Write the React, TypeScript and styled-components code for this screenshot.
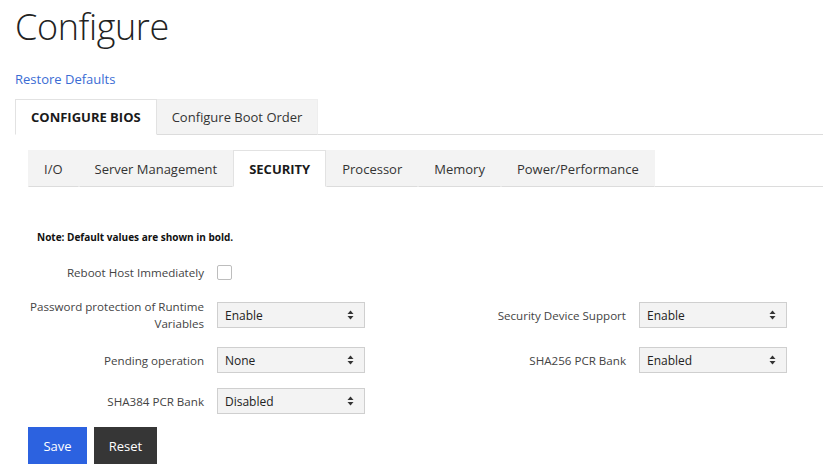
import React from 'react'
import styled, { createGlobalStyle } from 'styled-components'

const GlobalStyle = createGlobalStyle`
	html, body {
		margin: 0;
		padding: 0;
		background: #ffffff;
	}
	body {
		font-family: 'Open Sans', 'Noto Sans', Arial, sans-serif;
		color: #222;
	}
	* {
		box-sizing: border-box;
	}
`

interface ITab {
	label: string
	active?: boolean
}

interface IField {
	label: string
	value?: string
	options?: string[]
	checkbox?: boolean
}

const biosTabs: ITab[] = [
	{ label: 'Configure BIOS', active: true },
	{ label: 'Configure Boot Order' }
]

const sectionTabs: ITab[] = [
	{ label: 'I/O' },
	{ label: 'Server Management' },
	{ label: 'Security', active: true },
	{ label: 'Processor' },
	{ label: 'Memory' },
	{ label: 'Power/Performance' }
]

// grid order: left, right per row (null = empty cell)
const rows: Array<[IField, IField | null]> = [
	[{ label: 'Reboot Host Immediately', checkbox: true }, null],
	[
		{ label: 'Password protection of Runtime Variables', value: 'Enable', options: ['Enable', 'Disable'] },
		{ label: 'Security Device Support', value: 'Enable', options: ['Enable', 'Disable'] }
	],
	[
		{ label: 'Pending operation', value: 'None', options: ['None', 'TPM Clear'] },
		{ label: 'SHA256 PCR Bank', value: 'Enabled', options: ['Enabled', 'Disabled'] }
	],
	[{ label: 'SHA384 PCR Bank', value: 'Disabled', options: ['Enabled', 'Disabled'] }, null]
]

function SortIcon () {
	return (
		<svg width='7' height='10' viewBox='0 0 7 10'>
			<path d='M3.5 0.5 L6.5 4 L0.5 4 Z' fill='#333' />
			<path d='M3.5 9.5 L6.5 6 L0.5 6 Z' fill='#333' />
		</svg>
	)
}

function FieldCells ({ field }: { field: IField | null }) {
	if (!field) {
		return (
			<>
				<span />
				<span />
			</>
		)
	}
	return (
		<>
			<Label>{field.label}</Label>
			<Control>
				{field.checkbox ? (
					<Checkbox type='checkbox' />
				) : (
					<SelectWrap>
						<Select defaultValue={field.value}>
							{field.options!.map(o => <option key={o}>{o}</option>)}
						</Select>
						<Caret><SortIcon /></Caret>
					</SelectWrap>
				)}
			</Control>
		</>
	)
}

function App () {
	return (
		<Page>
			<GlobalStyle />
			<Title>Configure</Title>
			<RestoreLink href='#'>Restore Defaults</RestoreLink>
			<OuterTabs>
				{biosTabs.map(t => (
					<OuterTab key={t.label} active={!!t.active}>{t.label}</OuterTab>
				))}
			</OuterTabs>
			<InnerTabs>
				{sectionTabs.map(t => (
					<InnerTab key={t.label} active={!!t.active}>{t.label}</InnerTab>
				))}
			</InnerTabs>
			<Note>Note: Default values are shown in bold.</Note>
			<FormGrid>
				{rows.map(([left, right], i) => (
					<React.Fragment key={i}>
						<FieldCells field={left} />
						<FieldCells field={right} />
					</React.Fragment>
				))}
			</FormGrid>
			<Buttons>
				<Button kind='primary'>Save</Button>
				<Button kind='dark'>Reset</Button>
			</Buttons>
		</Page>
	)
}

const Page = styled.div`
	width: 823px;
	height: 468px;
	padding: 0 0 0 15px;
	overflow: hidden;
`
const Title = styled.h1`
	margin: 0;
	padding-top: 1px;
	font-size: 36px;
	font-weight: 300;
	line-height: 52px;
	color: #222;
	letter-spacing: -0.4px;
`
const RestoreLink = styled.a`
	display: block;
	margin-top: 17px;
	font-size: 13px;
	line-height: 18px;
	color: #3a6cd4;
	text-decoration: none;
`

interface IActive {
	active: boolean
}

const OuterTabs = styled.div`
	display: flex;
	margin-top: 11px;
	border-bottom: 1px solid #dcdcdc;
	height: 36px;
`
const OuterTab = styled.div<IActive>`
	display: flex;
	align-items: center;
	height: 36px;
	padding: 0 15px;
	font-size: 13px;
	font-weight: ${props => props.active ? 700 : 400};
	text-transform: ${props => props.active ? 'uppercase' : 'none'};
	color: ${props => props.active ? '#1a1a1a' : '#333'};
	background: ${props => props.active ? '#fff' : '#f3f3f3'};
	border: 1px solid ${props => props.active ? '#e2e2e2' : '#eeeeee'};
	border-bottom-color: ${props => props.active ? '#fff' : '#dcdcdc'};
	border-left-width: ${props => props.active ? '1px' : '0'};
	margin-bottom: -1px;
`
const InnerTabs = styled.div`
	display: flex;
	margin: 15px 0 0 13px;
	border-bottom: 1px solid #dcdcdc;
	height: 37px;
`
const InnerTab = styled.div<IActive>`
	display: flex;
	align-items: center;
	height: 37px;
	padding: 0 15px;
	font-size: 13px;
	font-weight: ${props => props.active ? 700 : 400};
	text-transform: ${props => props.active ? 'uppercase' : 'none'};
	color: ${props => props.active ? '#1a1a1a' : '#333'};
	background: ${props => props.active ? '#fff' : '#f3f3f3'};
	border: 1px solid ${props => props.active ? '#e2e2e2' : '#f3f3f3'};
	border-bottom-color: ${props => props.active ? '#fff' : '#dcdcdc'};
	margin-bottom: -1px;
`
const Note = styled.div`
	margin: 43px 0 0 22px;
	font-size: 10px;
	font-weight: 700;
	line-height: 14px;
	color: #111;
`
const FormGrid = styled.div`
	display: grid;
	grid-template-columns: 189px 148px 248px 148px;
	grid-template-rows: 22px 34px 26px 26px;
	column-gap: 13px;
	row-gap: 15px;
	margin-top: 17px;
	align-items: center;
`
const Label = styled.div`
	text-align: right;
	font-size: 11.6px;
	line-height: 17px;
	color: #444;
`
const Control = styled.div`
	display: flex;
	align-items: center;
`
const Checkbox = styled.input`
	appearance: none;
	margin: 0;
	width: 15px;
	height: 15px;
	border: 1px solid #bdbdbd;
	border-radius: 2px;
	background: #fff;
`
const SelectWrap = styled.div`
	position: relative;
	width: 148px;
	height: 26px;
`
const Select = styled.select`
	appearance: none;
	width: 100%;
	height: 100%;
	margin: 0;
	padding: 0 24px 0 7px;
	font-family: 'Open Sans', 'Noto Sans', Arial, sans-serif;
	font-size: 12px;
	color: #222;
	background: #f3f3f3;
	border: 1px solid #cfcfcf;
	border-radius: 0;
	outline: none;
`
const Caret = styled.span`
	position: absolute;
	right: 11px;
	top: 8px;
	display: flex;
	pointer-events: none;
`
const Buttons = styled.div`
	display: flex;
	gap: 7px;
	margin: 13px 0 0 13px;
`

interface IButton {
	kind: 'primary' | 'dark'
}

const Button = styled.button<IButton>`
	height: 37px;
	padding: 0 14px;
	font-family: 'Open Sans', 'Noto Sans', Arial, sans-serif;
	font-size: 13px;
	color: #fff;
	border: none;
	border-radius: 0;
	background: ${props => props.kind === 'primary' ? '#2c62e0' : '#363636'};
	min-width: ${props => props.kind === 'primary' ? '59px' : '63px'};
`

export default App
